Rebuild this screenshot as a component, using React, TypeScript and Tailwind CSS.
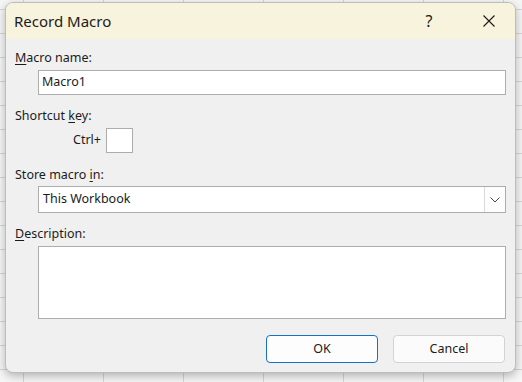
import React from "react";

const font = { fontFamily: '"Noto Sans", "Open Sans", sans-serif' };

const Label = ({ children }: { children: React.ReactNode }) => (
  <div className="h-[16px] leading-[16px] text-[12.5px] text-[#1b1b1b] pl-[9px]">
    {children}
  </div>
);

const RecordMacro = () => {
  return (
    <div
      className="w-[522px] h-[382px] overflow-hidden bg-[#f6f6f6] bg-[linear-gradient(to_right,#d6d6d6_1px,transparent_1px),linear-gradient(to_bottom,#d6d6d6_1px,transparent_1px)] bg-[size:80px_24px] bg-[position:23px_9px] pt-[2px] pl-[5px]"
      style={font}
    >
      <div className="w-[511px] h-[371px] rounded-[8px] border border-[#bdbdbd] bg-[#f0f0f0] overflow-hidden flex flex-col shadow-[0_3px_10px_rgba(0,0,0,0.28)]">
        {/* title bar */}
        <div className="h-[36px] shrink-0 bg-[#f8f3dd] flex items-center pl-[8px] pr-[20px]">
          <div className="flex-1 text-[15px] text-[#1b1b1b]">Record Macro</div>
          <div className="w-[20px] text-center text-[16px] text-[#1b1b1b] mr-[44px]">?</div>
          <svg width="12" height="12" viewBox="0 0 12 12">
            <path d="M0.5 0.5 L11.5 11.5 M11.5 0.5 L0.5 11.5" stroke="#1b1b1b" strokeWidth="1.1" fill="none" />
          </svg>
        </div>

        {/* body */}
        <div className="flex flex-col pt-[11px]">
          <Label>
            <span className="underline underline-offset-2">M</span>acro name:
          </Label>
          <div className="mt-[4px] ml-[32px] mr-[9px] h-[25px] bg-white border border-[#adadad] flex items-center pl-[3px] text-[12.5px] text-[#1b1b1b]">
            Macro1
          </div>

          <div className="mt-[13px]">
            <Label>
              Shortcut <span className="underline underline-offset-2">k</span>ey:
            </Label>
          </div>
          <div className="mt-[4px] flex items-center pl-[67px] gap-[5px]">
            <span className="text-[12.5px] text-[#1b1b1b]">Ctrl+</span>
            <div className="w-[27px] h-[25px] bg-white border border-[#adadad]" />
          </div>

          <div className="mt-[14px]">
            <Label>
              Store macro <span className="underline underline-offset-2">i</span>n:
            </Label>
          </div>
          <div className="mt-[3px] ml-[32px] mr-[9px] h-[27px] bg-white border border-[#adadad] flex items-stretch text-[12.5px] text-[#1b1b1b]">
            <div className="flex-1 flex items-center pl-[4px]">This Workbook</div>
            <div className="w-[21px] border-l border-[#d9d9d9] bg-[#fdfdfd] flex items-center justify-center">
              <svg width="10" height="6" viewBox="0 0 10 6">
                <path d="M0.5 0.5 L5 5 L9.5 0.5" stroke="#444" strokeWidth="1" fill="none" />
              </svg>
            </div>
          </div>

          <div className="mt-[13px]">
            <Label>
              <span className="underline underline-offset-2">D</span>escription:
            </Label>
          </div>
          <div className="mt-[4px] ml-[32px] mr-[9px] h-[73px] bg-white border border-[#adadad]" />

          <div className="mt-[16px] flex justify-end gap-[15px] pr-[10px]">
            <button className="w-[112px] h-[28px] rounded-[4px] border border-[#1a6fc4] bg-[#fdfdfd] text-[12.5px] text-[#1b1b1b]">
              OK
            </button>
            <button className="w-[112px] h-[28px] rounded-[4px] border border-[#d3d3d3] bg-[#fbfbfb] text-[12.5px] text-[#1b1b1b]">
              Cancel
            </button>
          </div>
        </div>
      </div>
    </div>
  );
};

export default function App() {
  return <RecordMacro />;
}
